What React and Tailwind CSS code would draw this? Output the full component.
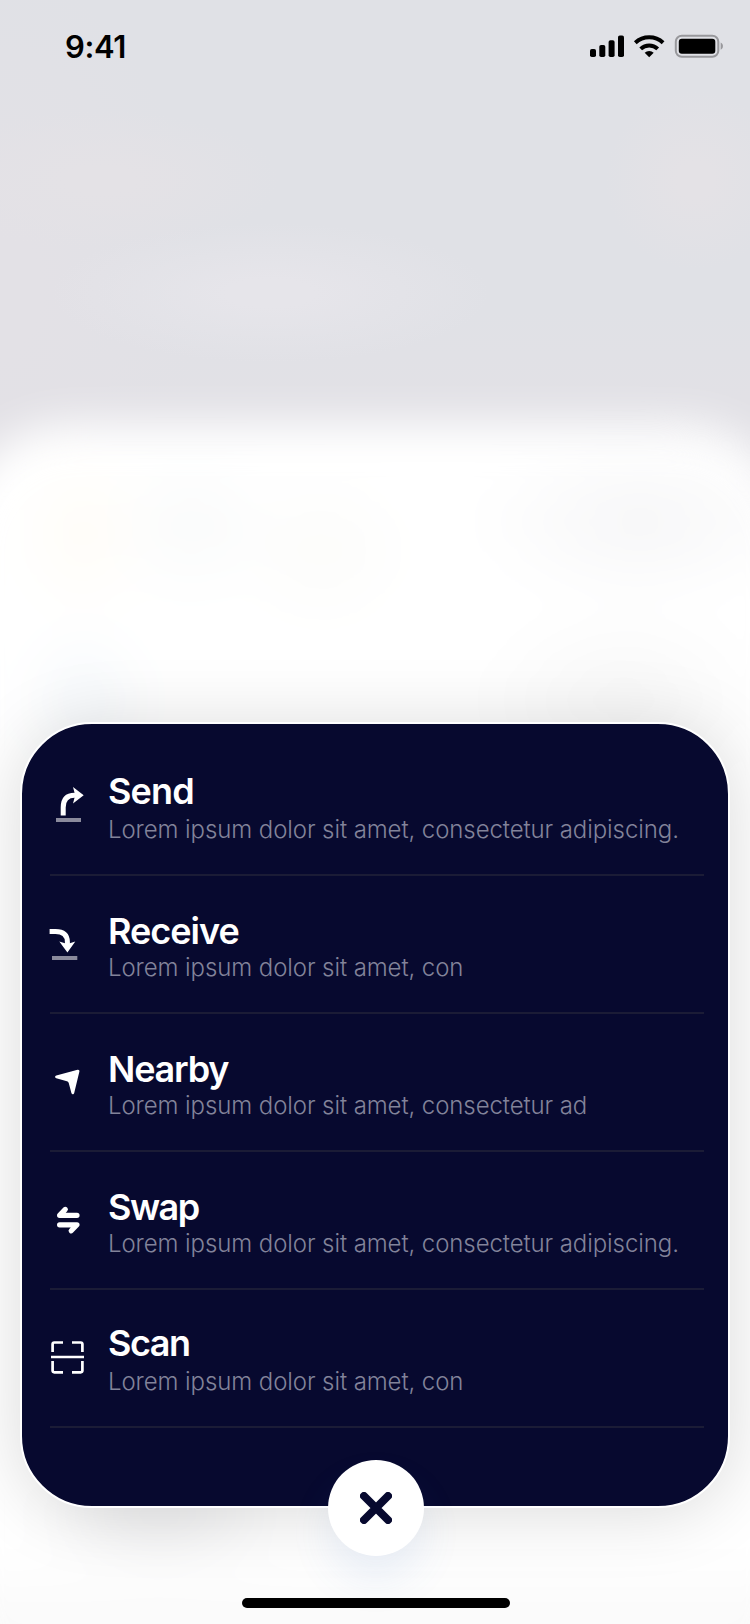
const SendIcon = () => (
  <svg width="60" height="70" viewBox="0 0 60 70" fill="none">
    <path d="M23.2 45.500V37.500C23.2 29.500 26.500 25.300 34.500 25.300H37" stroke="#fff" strokeWidth="5" />
    <path d="M33 17L43.700 25.300L33 33.500L35.200 25.300Z" fill="#fff" />
    <rect x="16" y="48" width="25" height="4" fill="#8a8a9c" />
  </svg>
);

const ReceiveIcon = () => (
  <svg width="60" height="70" viewBox="0 0 60 70" fill="none">
    <path d="M9.600 21.500H15.500C23.500 21.500 27.400 25 27.400 32V36" stroke="#fff" strokeWidth="5" />
    <path d="M19.300 31.500L27.400 42.500L35.300 31.500L27.400 34Z" fill="#fff" />
    <rect x="12" y="46" width="25.300" height="4" fill="#8a8a9c" />
  </svg>
);

const NearbyIcon = () => (
  <svg width="60" height="60" viewBox="0 0 60 60" fill="#fff">
    <path d="M37.600 19.800C38.800 19.500 39.700 20.500 39.400 21.600L34.200 43C33.800 44.700 31.900 44.700 31.400 43.100L28.800 33.300C28.500 32.300 27.900 31.600 26.900 31.300L16.300 28.300C14.700 27.800 14.700 25.900 16.300 25.500Z" />
  </svg>
);

const SwapIcon = () => (
  <svg width="60" height="60" viewBox="0 0 60 60" fill="none" stroke="#fff" strokeWidth="5.200" strokeLinecap="round" strokeLinejoin="round">
    <path d="M37 25.300H19.600L25.300 19.400" />
    <path d="M19.600 34.800H37L31.200 40.800" />
  </svg>
);

const ScanIcon = () => (
  <svg width="60" height="60" viewBox="0 0 60 60" fill="none" stroke="#fff" strokeWidth="2.700">
    <path d="M12.600 27V19.200Q12.600 17.500 14.300 17.500H23" />
    <path d="M32 17.500H40.700Q42.400 17.500 42.400 19.200V27" />
    <path d="M12.600 36V45.600Q12.600 47.300 14.300 47.300H23" />
    <path d="M32 47.300H40.700Q42.400 47.300 42.400 45.600V36" />
    <path d="M11 32H44" />
  </svg>
);

const actions = [
  { title: "Send", text: "Lorem ipsum dolor sit amet, consectetur adipiscing.", Icon: SendIcon, iconClass: "pt-8", titleClass: "pt-[31px] tracking-[-0.8px]" },
  { title: "Receive", text: "Lorem ipsum dolor sit amet, con", Icon: ReceiveIcon, iconClass: "pt-[34px]", titleClass: "pt-[33px] tracking-[-1px]" },
  { title: "Nearby", text: "Lorem ipsum dolor sit amet, consectetur ad", Icon: NearbyIcon, iconClass: "pt-9", titleClass: "pt-[33px] tracking-[-1.200px]" },
  { title: "Swap", text: "Lorem ipsum dolor sit amet, consectetur adipiscing.", Icon: SwapIcon, iconClass: "pt-[38px]", titleClass: "pt-[33px] tracking-[-1.500px]" },
  { title: "Scan", text: "Lorem ipsum dolor sit amet, con", Icon: ScanIcon, iconClass: "pt-[35px]", titleClass: "pt-[31px] tracking-[-1.500px]" },
];

function StatusBar() {
  return (
    <header className="flex h-[92px] items-center justify-between pl-[65px] pr-[26px]">
      <span className="text-[31px] font-semibold leading-none tracking-[-0.4px] text-black">9:41</span>
      <svg width="134" height="24" viewBox="0 0 134 24">
        <rect x="0" y="15" width="6" height="8" rx="1.800" />
        <rect x="9.300" y="11" width="6" height="12" rx="1.800" />
        <rect x="18.600" y="6.300" width="6" height="16.700" rx="1.800" />
        <rect x="28" y="1.500" width="6" height="21.500" rx="1.800" />
        <g fill="none" stroke="#000" strokeWidth="4">
          <path d="M45.300 8.800A20.500 20.500 0 0 1 73.100 8.800" />
          <path d="M50.700 14.900A12.500 12.500 0 0 1 67.700 14.900" />
        </g>
        <path d="M59.200 23.200L54.700 18.700A6.500 6.500 0 0 1 63.700 18.700Z" />
        <rect x="85.800" y="1.700" width="42.500" height="21" rx="6" fill="none" stroke="#98989c" strokeWidth="2" />
        <rect x="88.800" y="4.700" width="36.500" height="15" rx="3" />
        <path d="M130.700 8.500C133.700 9.800 133.700 14.400 130.700 15.700Z" fill="#98989c" />
      </svg>
    </header>
  );
}

function Backdrop() {
  return (
    <div className="absolute inset-0 flex flex-col overflow-hidden bg-[radial-gradient(180px_70px_at_100px_180px,#e4e2e6_20%,transparent),radial-gradient(220px_70px_at_270px_293px,#e6e5ea_20%,transparent),radial-gradient(90px_90px_at_695px_180px,#e4e2e6_20%,transparent),radial-gradient(200px_320px_at_0px_290px,#e3e1e6_20%,transparent),linear-gradient(to_bottom,transparent_310px,#e2e1e6_400px)] pt-[424px]">
      <div className="-mx-12 h-[1300px] shrink-0 rounded-[120px] bg-white blur-[22px]">
        <div className="h-full bg-[radial-gradient(70px_90px_at_130px_110px,#fffdf8_20%,transparent),radial-gradient(90px_80px_at_240px_102px,#fafbfb_10%,transparent),radial-gradient(90px_80px_at_369px_126px,#fcfcfa_10%,transparent),radial-gradient(170px_85px_at_688px_98px,#f7f7f8_10%,transparent),radial-gradient(70px_80px_at_132px_276px,#f6f9fc_10%,transparent),radial-gradient(150px_100px_at_672px_276px,#f8f8f8_10%,transparent),radial-gradient(130px_60px_at_208px_1090px,#f0f0f1_10%,transparent),linear-gradient(to_bottom,transparent_1130px,#fafafa_1200px)] rounded-[120px]" />
      </div>
    </div>
  );
}

export default function App() {
  return (
    <div className="relative isolate h-[1624px] w-[750px] overflow-hidden bg-[#e0e1e6] font-['Inter','Liberation_Sans',sans-serif]">
      <Backdrop />
      <div className="relative flex h-full flex-col justify-between pb-4">
        <StatusBar />
        <main className="mx-5 mb-[90px] mt-auto h-[786px] rounded-[72px] border-2 border-white bg-[#07092f] pl-7 pr-6 pt-[14px] shadow-[0_4px_70px_rgba(0,0,0,0.15)]">
          <ul>
            {actions.map(({ title, text, Icon, iconClass, titleClass }) => (
              <li key={title} className="flex h-[138px] border-b-2 border-[#1b1c36]">
                <div className={`-ml-[10px] w-[68px] shrink-0 ${iconClass}`}>
                  <Icon />
                </div>
                <div className="whitespace-nowrap">
                  <h2 className={`h-[77px] text-[36px] font-semibold leading-[44px] text-white ${titleClass}`}>{title}</h2>
                  <p className="text-[24px] font-light leading-[30px] tracking-[-0.090px] text-[#82839a]">{text}</p>
                </div>
              </li>
            ))}
          </ul>
          <button aria-label="Close" className="ml-[278px] mt-8 grid size-24 place-items-center rounded-full bg-white shadow-[0_24px_40px_rgba(70,120,200,0.1)]">
            <svg width="32" height="32" viewBox="0 0 32 32" fill="none" stroke="#07092f" strokeWidth="8" strokeLinecap="round">
              <path d="M4 4L28 28M28 4L4 28" />
            </svg>
          </button>
        </main>
        <div className="ml-[242px] h-[10px] w-[268px] rounded-full bg-black" />
      </div>
    </div>
  );
}
